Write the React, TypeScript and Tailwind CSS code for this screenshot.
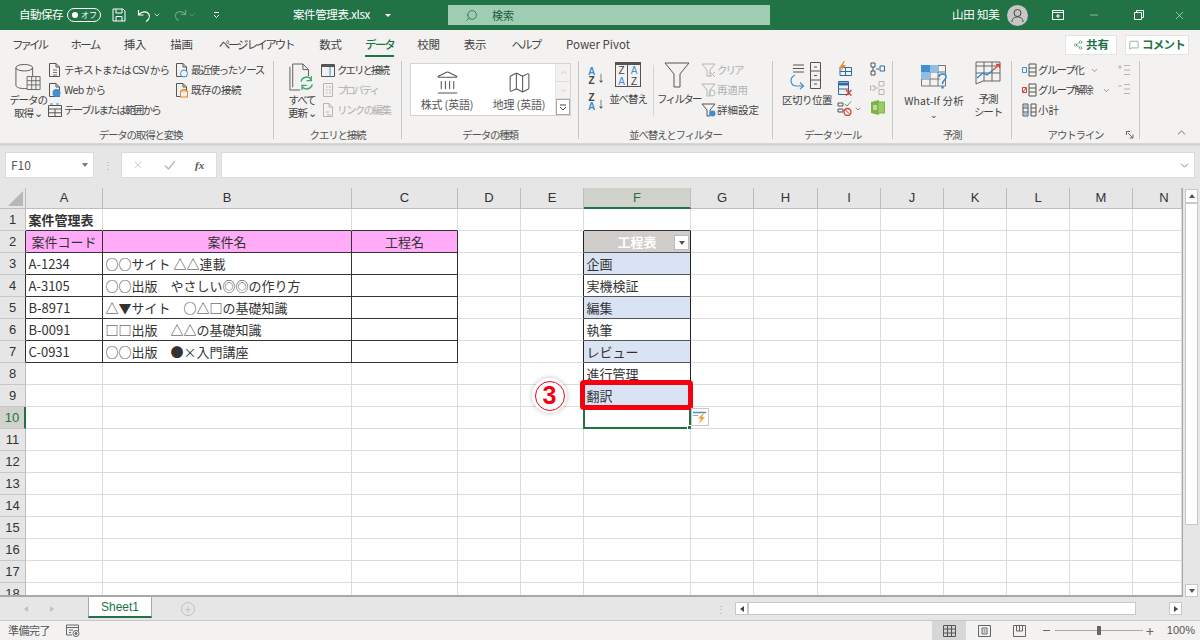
import type { ReactNode } from 'react';
import { ChevronDown, ChevronUp, Landmark, Map as MapIcon, Search, X, Minus, Share2, MessageSquare } from 'lucide-react';

const columns = ['A', 'B', 'C', 'D', 'E', 'F', 'G', 'H', 'I', 'J', 'K', 'L', 'M', 'N'];
const rows = Array.from({ length: 18 }, (_, i) => i + 1);

const tabs: { label: string; width: string; track: string; active?: boolean }[] = [
  { label: 'ファイル', width: 'w-[58px]', track: 'tracking-[-3px]' },
  { label: 'ホーム', width: 'w-[54px]', track: 'tracking-[-1.8px]' },
  { label: '挿入', width: 'w-[46px]', track: 'tracking-[-0.3px]' },
  { label: '描画', width: 'w-[47px]', track: 'tracking-[-0.3px]' },
  { label: 'ページ レイアウト', width: 'w-[102px]', track: 'tracking-[-2.2px]' },
  { label: '数式', width: 'w-[47px]', track: 'tracking-[-0.3px]' },
  { label: 'データ', width: 'w-[51px]', track: 'tracking-[-1.8px]', active: true },
  { label: '校閲', width: 'w-[47px]', track: 'tracking-[-0.3px]' },
  { label: '表示', width: 'w-[46px]', track: 'tracking-[-0.3px]' },
  { label: 'ヘルプ', width: 'w-[56px]', track: 'tracking-[-1.8px]' },
  { label: 'Power Pivot', width: 'w-[88px]', track: 'tracking-[0px]' },
];

const cellText: Record<string, string> = {
  A1: '案件管理表',
  A2: '案件コード',
  B2: '案件名',
  C2: '工程名',
  A3: 'A-1234',
  B3: '○○サイト △△連載',
  A4: 'A-3105',
  B4: '○○出版　やさしい◎◎の作り方',
  A5: 'B-8971',
  B5: '△▼サイト　○△□の基礎知識',
  A6: 'B-0091',
  B6: '□□出版　△△の基礎知識',
  A7: 'C-0931',
  B7: '○○出版　●×入門講座',
  F2: '工程表',
  F3: '企画',
  F4: '実機検証',
  F5: '編集',
  F6: '執筆',
  F7: 'レビュー',
  F8: '進行管理',
  F9: '翻訳',
};

const Stroke = ({ w, h, children }: { w: number; h: number; children: ReactNode }) => (
  <svg width={w} height={h} viewBox={`0 0 ${w} ${h}`} fill="none" stroke="#555" strokeWidth="1" className="shrink-0">
    {children}
  </svg>
);

const Page = ({ c = '#555' }: { c?: string }) => <path d="M1.5 14.5V1.5H8L11.5 5V14.5Z M8 1.5V5H11.5" stroke={c} />;

const RibbonRow = ({ icon, label, muted, chevron, track = 'tracking-[-1.3px]' }: { icon: ReactNode; label: string; muted?: boolean; chevron?: string; track?: string }) => (
  <div className={`flex items-center h-[20px] whitespace-nowrap text-[10.5px] ${track} ${muted ? 'text-[#b0b0b0]' : 'text-[#444]'}`}>
    <span className="w-[16px] flex justify-start shrink-0">{icon}</span>
    <span>{label}</span>
    {chevron && <ChevronDown className={`${chevron} text-[#555]`} size={9} strokeWidth={1.5} />}
  </div>
);

const BigLabel = ({ children, width, track = 'tracking-[-1.1px]' }: { children: ReactNode; width: string; track?: string }) => (
  <div className={`${width} text-center text-[10.5px] leading-[13px] ${track} text-[#444] whitespace-nowrap`}>{children}</div>
);

const Group = ({ label, width, children, launcher }: { label: string; width: string; children: ReactNode; launcher?: boolean }) => (
  <div className={`${width} h-[78px] shrink-0 flex flex-col border-r border-[#c8c6c4]`}>
    <div className="-mt-[2px] h-[68px] shrink-0 flex">{children}</div>
    <div className="relative h-[16px] shrink-0 flex items-center justify-center text-[10.5px] tracking-[-1.2px] text-[#555]">
      {label}
      {launcher && (
        <svg width="8" height="8" viewBox="0 0 8 8" fill="none" stroke="#666" className="absolute right-[5px] top-[4px]">
          <path d="M.5 4V.5H4 M2 2L7 7 M7 3.5V7H3.5" />
        </svg>
      )}
    </div>
  </div>
);

const cellClass = (col: string, row: number) => {
  const inLeft = ['A', 'B', 'C'].includes(col) && row >= 2 && row <= 7;
  const inRight = col === 'F' && row >= 2 && row <= 8;
  let cls = 'border-r border-b border-r-[#dcdcdc] border-b-[#dcdcdc]';
  if (inLeft) cls = 'border-r border-b border-r-[#333] border-b-[#333]';
  if (['A', 'B', 'C'].includes(col) && row === 1) cls = 'border-r border-b border-r-[#dcdcdc] border-b-[#333]';
  if (inRight) cls = 'border-r border-b border-r-[#222] border-b-[#555]';
  if (col === 'F' && row === 1) cls = 'border-r border-b border-r-[#dcdcdc] border-b-[#333]';
  if (col === 'E' && row >= 2 && row <= 8) cls = 'border-r border-b border-r-[#222] border-b-[#dcdcdc]';
  if (col === 'E' && row === 10) cls = 'border-r border-b border-r-[#217346] border-b-[#dcdcdc]';
  if (col === 'F' && row === 10) cls = 'border-2 border-[#217346] -ml-px';
  if (row === 2 && ['A', 'B', 'C'].includes(col)) cls += ' bg-[#ffabf7] text-center';
  if (col === 'F' && row === 2) cls += ' bg-[#d0cdca] text-center text-white font-bold';
  if (col === 'F' && [3, 5, 7, 9].includes(row)) cls += ' bg-[#dae3f3]';
  if (col === 'A' && row === 1) cls += ' font-bold';
  return cls;
};

const Cell = ({ col, row }: { col: string; row: number }) => {
  const text = cellText[`${col}${row}`];
  return (
    <div className={`relative min-w-0 flex items-center justify-center px-[2.5px] text-[13px] text-[#333] whitespace-nowrap ${cellClass(col, row)}`}>
      <span className={row === 2 ? 'w-full' : 'w-full text-left'}>{text}</span>
      {col === 'F' && row === 2 && (
        <span className="absolute right-[1px] top-[4px] w-[15px] h-[15px] bg-white border border-[#bbb] flex items-center justify-center">
          <span className="w-0 h-0 border-x-[3.5px] border-x-transparent border-t-[4px] border-t-[#555]" />
        </span>
      )}
      {col === 'F' && row === 10 && (
        <>
          <span className="absolute -right-[3px] -bottom-[3px] w-[5px] h-[5px] bg-[#217346] border border-white" />
          <span className="absolute -right-[20px] -top-[1px] w-[18px] h-[18px] bg-white border border-[#c8c8c8] flex items-center justify-center z-10">
            <svg width="16" height="16" viewBox="0 0 16 16" fill="none">
              <path d="M1 3.5H14" stroke="#4a8fd0" strokeWidth="1.5" />
              <path d="M1 6.5H6" stroke="#9ab" />
              <path d="M11 4.5L6 9.5H9L6.5 15L13 8H10L12 4.5Z" fill="#f0a030" />
            </svg>
          </span>
        </>
      )}
    </div>
  );
};

export default function App() {
  return (
    <div className="relative w-[1200px] h-[640px] overflow-hidden flex flex-col bg-[#e6e6e6] text-[11px] font-['Noto_Sans_CJK_JP','Liberation_Sans',sans-serif]">
      {/* title bar */}
      <div className="h-[30px] shrink-0 bg-[#217346] flex items-center text-white text-[11.5px]">
        <span className="ml-[19px] w-[48px] tracking-[-0.5px] whitespace-nowrap">自動保存</span>
        <span className="w-[34px] h-[14px] rounded-full border border-white flex items-center justify-between pl-[4px] pr-[3px]">
          <span className="w-[6px] h-[6px] rounded-full bg-white" />
          <span className="text-[8px] leading-none">オフ</span>
        </span>
        <svg className="ml-[11px]" width="14" height="14" viewBox="0 0 14 14" fill="none" stroke="white">
          <path d="M1 1H11L13 3V13H1Z M4 1V5H10V1 M4 13V8.5H10V13" />
        </svg>
        <svg className="ml-[11px]" width="15" height="15" viewBox="0 0 15 15" fill="none" stroke="white" strokeWidth="1.2">
          <path d="M1.5 2V7H6.5 M1.8 6.8C4 3.5 10 2.5 12 6.5C13.2 9 11.5 12 9 13.5" />
        </svg>
        <ChevronDown className="ml-[1px]" size={8} strokeWidth={2} />
        <svg className="ml-[12px]" width="14" height="14" viewBox="0 0 15 15" fill="none" stroke="#6fa98a" strokeWidth="1.2">
          <path d="M13.5 2V7H8.5 M13.2 6.8C11 3.5 5 2.5 3 6.5C1.8 9 3.5 12 6 13.5" />
        </svg>
        <ChevronDown className="ml-[1px] text-[#6fa98a]" size={8} strokeWidth={2} />
        <svg className="ml-[17px]" width="7" height="8" viewBox="0 0 7 8" fill="none" stroke="white">
          <path d="M1 1.5H6 M1 4L3.5 6.5L6 4" />
        </svg>
        <span className="ml-[73px] w-[90px] tracking-[-0.4px] whitespace-nowrap">案件管理表.xlsx</span>
        <span className="ml-[2px] w-0 h-0 border-x-[3px] border-x-transparent border-t-[3px] border-t-white" />
        <div className="ml-[57px] w-[322px] h-[20px] bg-[#9fcdb3] flex items-center text-[#1d5c3a] text-[11px]">
          <Search className="ml-[17px] -scale-x-100" size={13} strokeWidth={1.3} />
          <span className="ml-[14px]">検索</span>
        </div>
        <span className="ml-[182px] w-[46px] whitespace-nowrap tracking-[-0.2px]">山田 知美</span>
        <span className="ml-[9px] w-[21px] h-[21px] rounded-full bg-[#c8c6c4] flex items-center justify-center">
          <svg width="13" height="15" viewBox="0 0 13 15" fill="none" stroke="#444">
            <circle cx="6.5" cy="5" r="3.5" />
            <path d="M1 14C1 10 4 9 6.5 9S12 10 12 14" />
          </svg>
        </span>
        <svg className="ml-[24px]" width="12" height="10" viewBox="0 0 12 10" fill="none" stroke="white">
          <path d="M.5.5H11.5V9.5H.5Z M.5 2.5H11.5 M6 4V8 M4 6H8" />
        </svg>
        <Minus className="ml-[24px]" size={12} strokeWidth={1} />
        <svg className="ml-[34px]" width="10" height="10" viewBox="0 0 10 10" fill="none" stroke="white">
          <path d="M.5 2.5H7.5V9.5H.5Z M2.5 2.5V.5H9.5V7.5H7.5" />
        </svg>
        <X className="ml-[29px]" size={13} strokeWidth={1} />
      </div>

      {/* ribbon tabs */}
      <div className="h-[29px] shrink-0 bg-[#f3f2f1] flex items-center text-[11.5px] text-[#444]">
        {tabs.map((tab) => (
          <div key={tab.label} className={`${tab.width} h-full flex items-center justify-center whitespace-nowrap ${tab.track}`}>
            <span className={`relative h-[20px] leading-[20px] -mt-[2px] ${tab.active ? 'text-[#217346] font-medium' : ''}`}>
              {tab.label}
              {tab.active && <span className="absolute left-0 right-0 -bottom-[3px] h-[2px] bg-[#217346]" />}
            </span>
          </div>
        ))}
        <div className="ml-auto flex items-center gap-[8px] pr-[11px] text-[#217346] font-bold text-[11.5px]">
          <span className="w-[52px] h-[20px] bg-white border border-[#e6e4e2] flex items-center justify-center gap-[3px]">
            <Share2 size={10} strokeWidth={1.2} />
            共有
          </span>
          <span className="w-[64px] h-[20px] bg-white border border-[#e6e4e2] flex items-center justify-center gap-[3px] tracking-[-0.8px]">
            <MessageSquare size={10} strokeWidth={1.2} />
            コメント
          </span>
        </div>
      </div>

      {/* ribbon */}
      <div className="h-[85px] shrink-0 bg-[#f3f2f1] flex pl-[8px] pt-[2px] border-b border-[#d6d6d6] shadow-[0_1px_2px_rgba(0,0,0,0.15)]">
        <Group label="データの取得と変換" width="w-[266px]">
          <div className="w-[40px] flex flex-col items-center pt-[4px] shrink-0">
            <svg width="26" height="28" viewBox="0 0 28 30" fill="none" stroke="#555">
              <ellipse cx="10" cy="5" rx="9" ry="3.5" />
              <path d="M1 5V24C1 26 5 27.5 10 27.5H13 M19 5V14" />
              <path d="M13 14.5H27V28.5H13Z M13 19H27 M13 23.5H27 M18 14.5V28.5 M22.5 14.5V28.5" stroke="#666" fill="#f3f2f1" />
            </svg>
            <div className="mt-[2px]"><BigLabel width="w-[40px]">データの<br />取得 ⌄</BigLabel></div>
          </div>
          <div className="w-[127px] shrink-0 pt-[1px]">
            <RibbonRow track="tracking-[-0.9px]" label="テキストまたは CSV から" icon={<Stroke w={14} h={16}><Page /><path d="M5 8H9 M5 10.5H9 M5 13H9" stroke="#777" /></Stroke>} />
            <RibbonRow track="tracking-[-0.6px]" label="Web から" icon={<Stroke w={14} h={16}><Page /><circle cx="8.5" cy="11" r="4" fill="#3f8fd2" stroke="none" /></Stroke>} />
            <RibbonRow track="tracking-[-1.7px]" label="テーブルまたは範囲から" icon={<Stroke w={14} h={14}><path d="M.5 2.5H13.5V13.5H.5Z M.5 6H13.5 M.5 9.8H13.5 M7 6V13.5" /><path d="M2 1H5 M8 1H11" stroke="#3f8fd2" /></Stroke>} />
          </div>
          <div className="flex-1 pt-[1px]">
            <RibbonRow label="最近使ったソース" icon={<Stroke w={14} h={16}><Page /><circle cx="9" cy="11.5" r="3.5" fill="#f3f2f1" stroke="#3f8fd2" /></Stroke>} />
            <RibbonRow track="tracking-[-0.5px]" label="既存の接続" icon={<Stroke w={14} h={16}><Page /><rect x="5.5" y="9" width="7" height="6" fill="#f3f2f1" stroke="#e08a2c" /><path d="M7 9V7.5H11V9" stroke="#e08a2c" /></Stroke>} />
          </div>
        </Group>

        <Group label="クエリと接続" width="w-[128px]">
          <div className="w-[44px] ml-[6px] flex flex-col items-center pt-[4px] shrink-0">
            <svg width="26" height="28" viewBox="0 0 28 30" fill="none" stroke="#555">
              <path d="M4 26V1H15L21 7V14 M15 1V7H21 M1 4V29H12" />
              <path d="M13 20A6 6 0 0 1 24 18 M25 23A6 6 0 0 1 14 25" stroke="#3fa66b" strokeWidth="1.6" />
              <path d="M24 14V19H19 M14 29V24H19" stroke="#3fa66b" strokeWidth="1.4" />
            </svg>
            <div className="mt-[2px]"><BigLabel width="w-[40px]">すべて<br />更新 ⌄</BigLabel></div>
          </div>
          <div className="flex-1 pt-[1px] -ml-[3px]">
            <RibbonRow track="tracking-[-2px]" label="クエリと接続" icon={<Stroke w={14} h={13}><path d="M.5.5H13.5V12.5H.5Z" /><path d="M.5 2H13.5" strokeWidth="2" /><path d="M9 3V12.5" stroke="#3f8fd2" /></Stroke>} />
            <RibbonRow track="tracking-[-2.2px]" muted label="プロパティ" icon={<Stroke w={14} h={14}><path d="M2.5.5H11.5V13.5H2.5Z M5 4H6.5 M8 4H10 M5 7H6.5 M8 7H10 M5 10H6.5 M8 10H10" stroke="#b5b5b5" /></Stroke>} />
            <RibbonRow track="tracking-[-1.6px]" muted label="リンクの編集" icon={<Stroke w={14} h={16}><path d="M2.5 14.5V1.5H8L11.5 5V14.5Z M8 1.5V5H11.5 M5 10H8 M6 13H10" stroke="#b5b5b5" /></Stroke>} />
          </div>
        </Group>

        <Group label="データの種類" width="w-[177px]">
          <div className="ml-[8px] mt-[4px] w-[161px] h-[53px] bg-white border border-[#d4d4d4] flex">
            <div className="w-[72px] flex flex-col items-center pt-[6px] text-[#555]">
              <Landmark size={25} strokeWidth={1} />
              <span className="mt-[1px] text-[11px] tracking-[-0.2px] whitespace-nowrap">株式 (英語)</span>
            </div>
            <div className="w-[72px] flex flex-col items-center pt-[6px] text-[#555]">
              <MapIcon size={25} strokeWidth={1} />
              <span className="mt-[1px] text-[11px] tracking-[-0.2px] whitespace-nowrap">地理 (英語)</span>
            </div>
            <div className="flex-1 flex flex-col border-l border-[#e4e4e4] bg-[#f3f2f1]">
              <span className="h-[18px] flex items-center justify-center border-b border-[#ddd] text-[#c4c4c4]"><ChevronUp size={9} /></span>
              <span className="h-[17px] flex items-center justify-center border-b border-[#ddd] text-[#c4c4c4]"><ChevronDown size={9} /></span>
              <span className="flex-1 flex items-center justify-center border border-[#aaa] bg-white">
                <svg width="8" height="7" viewBox="0 0 8 7" fill="none" stroke="#444"><path d="M1 1H7 M1 3L4 6L7 3" /></svg>
              </span>
            </div>
          </div>
        </Group>

        <Group label="並べ替えとフィルター" width="w-[194px]">
          <div className="w-[20px] ml-[9px] pt-[8px] flex flex-col gap-[8px] shrink-0 leading-[9px] font-['Liberation_Sans',sans-serif] text-[10px] font-bold">
            <div className="flex items-center"><span className="text-center"><span className="text-[#3f8fd2]">A</span><br /><span className="text-[#444]">Z</span></span><span className="ml-[2px] text-[15px] font-normal text-[#444]">↓</span></div>
            <div className="flex items-center"><span className="text-center"><span className="text-[#444]">Z</span><br /><span className="text-[#3f8fd2]">A</span></span><span className="ml-[2px] text-[15px] font-normal text-[#444]">↓</span></div>
          </div>
          <div className="w-[40px] flex flex-col items-center pt-[3px] shrink-0">
            <div className="w-[26px] h-[25px] border border-[#555] border-t-[3px] grid grid-cols-2 text-center leading-[11px] text-[10px] font-['Liberation_Sans',sans-serif] divide-x divide-[#555]">
              <span className="text-[#444]">Z<br /><span className="text-[#3f8fd2]">A</span></span>
              <span className="text-[#3f8fd2]">A<br /><span className="text-[#444]">Z</span></span>
            </div>
            <div className="mt-[5px]"><BigLabel width="w-[40px]">並べ替え</BigLabel></div>
          </div>
          <div className="mt-[6px] ml-[5px] h-[51px] border-l border-[#d4d4d4]" />
          <div className="w-[40px] flex flex-col items-center pt-[3px] shrink-0 ml-[3px]">
            <svg width="26" height="26" viewBox="0 0 26 26" fill="none" stroke="#555">
              <path d="M1 1H25L16 12V25H10V12Z" />
            </svg>
            <div className="mt-[4px]"><BigLabel width="w-[40px]" track="tracking-[-1.7px]">フィルター</BigLabel></div>
          </div>
          <div className="flex-1 pl-[4px] pt-[1px]">
            <RibbonRow muted track="tracking-[-2px]" label="クリア" icon={<Stroke w={16} h={14}><path d="M1 1H14L9 7V13H6V7Z" stroke="#b5b5b5" /><path d="M9 9L14 14 M14 9L9 14" stroke="#b5b5b5" /></Stroke>} />
            <RibbonRow muted track="tracking-[-0.2px]" label="再適用" icon={<Stroke w={16} h={14}><path d="M1 1H14L9 7V13H6V7Z" stroke="#b5b5b5" /><circle cx="11" cy="10" r="3" stroke="#a8c8a8" /></Stroke>} />
            <RibbonRow track="tracking-[0px]" label="詳細設定" icon={<Stroke w={16} h={14}><path d="M1 1H14L9 7V13H6V7Z" /><circle cx="11.5" cy="10.5" r="3" fill="#3f8fd2" stroke="none" /></Stroke>} />
          </div>
        </Group>

        <Group label="データ ツール" width="w-[120px]">
          <div className="w-[52px] ml-[8px] flex flex-col items-center pt-[3px] shrink-0">
            <svg width="38" height="28" viewBox="0 0 38 28" fill="none" stroke="#555">
              <path d="M5 3H16 M5 6.5H16 M5 10H16" />
              <path d="M22.5.5H32.5V26.5H22.5Z M22.5 9H32.5 M22.5 18H32.5 M26 5H29 M26 13.5H29 M26 22H29" />
              <path d="M7 13C1 16 2 24 9 24H15 M12 20.5L15.5 24L12 27" stroke="#3f8fd2" strokeWidth="1.2" />
            </svg>
            <div className="mt-[3px]"><BigLabel width="w-[52px]" track="tracking-[-0.5px]">区切り位置</BigLabel></div>
          </div>
          <div className="w-[32px] shrink-0 flex flex-col items-start gap-[5px] pt-[2px] pl-[4px]">
            <svg width="15" height="15" viewBox="0 0 15 15" fill="none" stroke="#2b6ca8">
              <path d="M3 6.5H14.5V14.5H3Z M3 10.5H14.5 M8.5 6.5V14.5" />
              <path d="M7 0L2 7H5L3 11L9 4H6L8 0Z" fill="#e08a2c" stroke="none" />
            </svg>
            <svg width="15" height="15" viewBox="0 0 15 15" fill="none" stroke="#2b6ca8">
              <path d="M1.5.5H11.5V13.5H1.5Z" />
              <path d="M1.5 3H11.5" strokeWidth="3" />
              <path d="M1.5 8H11.5" />
              <path d="M9 9L14.5 14.5 M14.5 9L9 14.5" stroke="#d83b2f" strokeWidth="1.4" />
            </svg>
            <div className="flex items-center">
              <svg width="15" height="15" viewBox="0 0 15 15" fill="none" stroke="#555">
                <path d="M1 2H6V5H1Z M1 8H6V11H1Z" />
                <path d="M8 3L10 5L14 0.5" stroke="#3fa66b" />
                <circle cx="10.5" cy="11" r="3.5" stroke="#d83b2f" strokeWidth="1.3" />
                <path d="M8 8.5L13 13.5" stroke="#d83b2f" />
              </svg>
              <ChevronDown className="ml-[2px] text-[#555]" size={8} strokeWidth={2} />
            </div>
          </div>
          <div className="flex-1 flex flex-col gap-[5px] pt-[3px] pl-[5px]">
            <svg width="15" height="14" viewBox="0 0 15 14" fill="none" stroke="#555">
              <path d="M1 1H5V5H1Z M1 9H5V13H1Z M3 5V9" />
              <path d="M10 4H14.5V9H10Z" stroke="#2b6ca8" />
              <path d="M6 7H9" stroke="#2b6ca8" />
            </svg>
            <svg width="15" height="14" viewBox="0 0 15 14" fill="none" stroke="#b5b5b5">
              <path d="M.5 5H5V9H.5Z M9 .5H14V5H9Z M9 8.5H14V13.5H9Z M5 7H9" />
            </svg>
            <svg width="15" height="15" viewBox="0 0 15 15" fill="none">
              <path d="M1 2L9 0V15L1 13Z" fill="#7cb342" />
              <rect x="8" y="2" width="6.5" height="11" fill="#9ccc65" stroke="#7cb342" />
              <path d="M4 5V10 M6 5V10" stroke="white" />
            </svg>
          </div>
        </Group>

        <Group label="予測" width="w-[119px]">
          <div className="w-[70px] ml-[6px] flex flex-col items-center pt-[5px] shrink-0">
            <svg width="28" height="26" viewBox="0 0 28 26" fill="none" stroke="#777">
              <path d="M1.5 1.5H25.5V22H1.5Z M1.5 8H25.5 M1.5 15H25.5 M10 1.5V22 M18 1.5V22" />
              <rect x="1" y="1" width="9" height="7" fill="#3f8fd2" stroke="none" />
              <rect x="1" y="8" width="9" height="7" fill="#8fbfe6" stroke="none" />
              <rect x="10" y="1" width="8" height="7" fill="#8fbfe6" stroke="none" />
              <path d="M19 13C19 9 26 9 26 13C26 16 22.5 16 22.5 20" stroke="#2b86cf" strokeWidth="1.5" fill="#f3f2f1" />
              <circle cx="22.5" cy="23.5" r="1.2" fill="#2b86cf" stroke="none" />
            </svg>
            <div className="mt-[4px]"><BigLabel width="w-[70px]" track="tracking-[0.1px]">What-If 分析<br /><span className="text-[9px]">⌄</span></BigLabel></div>
          </div>
          <div className="w-[36px] ml-[1px] flex flex-col items-center pt-[2px] shrink-0">
            <svg width="26" height="24" viewBox="0 0 26 24" fill="none" stroke="#666">
              <path d="M1 1H25V20H8L1 23Z M1 5H25 M9 1V20 M17 1V20 M1 12H25" />
              <path d="M2 17L8 12L12 14L18 9" stroke="#2b86cf" strokeWidth="1.3" />
              <path d="M18 9L24 4 M21 3.5H24.5V7" stroke="#e0403a" strokeWidth="1.3" />
            </svg>
            <div className="mt-[7px]"><BigLabel width="w-[36px]">予測<br />シート</BigLabel></div>
          </div>
        </Group>

        <Group label="アウトライン" width="w-[128px]" launcher>
          <div className="w-[105px] shrink-0 pl-[10px] pt-[1px]">
            <RibbonRow chevron="ml-[7px]" label="グループ化" icon={<Stroke w={15} h={14}><path d="M.5 4.5H4.5V9.5H.5Z" stroke="#3f8fd2" /><path d="M7 1H14V13H7Z M7 5H14 M7 9H14" /></Stroke>} />
            <RibbonRow chevron="ml-[9px]" label="グループ解除" icon={<Stroke w={15} h={14}><path d="M.5 4.5H4.5V9.5H.5Z M1 9L4 5" stroke="#d83b2f" /><path d="M7 1H14V13H7Z M7 5H14 M7 9H14" /></Stroke>} />
            <RibbonRow track="tracking-[0px]" label="小計" icon={<Stroke w={15} h={14}><path d="M1 1H6V13H1Z M9 1H14V13H9Z M9 5H14 M9 9H14 M1 5H6 M1 9H6" /><path d="M2 3H5 M2 11H5" stroke="#3f8fd2" /></Stroke>} />
          </div>
          <div className="flex-1 pt-[5px] flex flex-col gap-[7px]">
            <svg width="14" height="12" viewBox="0 0 14 12" fill="none" stroke="#b5b5b5"><path d="M1 3H5 M3 1V5 M7 1.5H13 M7 6H13 M7 10.5H13" /></svg>
            <svg width="14" height="12" viewBox="0 0 14 12" fill="none" stroke="#b5b5b5"><path d="M1 3H5 M7 1.5H13 M7 6H13 M7 10.5H13" /></svg>
          </div>
        </Group>
        <div className="flex-1 flex items-end justify-end pr-[12px] pb-[4px] text-[#555]">
          <ChevronUp size={13} strokeWidth={1.5} />
        </div>
      </div>

      {/* formula bar */}
      <div className="h-[30px] shrink-0 mt-[6px] flex items-center pl-[5px] pr-[5px]">
        <div className="w-[89px] h-[26px] bg-white border border-[#dcdcdc] flex items-center justify-between pl-[5px] pr-[5px] text-[12px] text-[#555]">
          F10
          <span className="w-0 h-0 border-x-[3.5px] border-x-transparent border-t-[4px] border-t-[#777]" />
        </div>
        <div className="w-[27px] flex justify-center text-[#aaa] text-[10px] leading-[4px]">⋮</div>
        <div className="w-[96px] h-[26px] bg-white border border-[#dcdcdc] flex items-center text-[#b8b8b8]">
          <X className="ml-[10px]" size={12} strokeWidth={1.4} />
          <svg className="ml-[20px]" width="12" height="12" viewBox="0 0 12 12" fill="none" stroke="#b8b8b8" strokeWidth="1.4"><path d="M1 6.5L4.5 10L11 2" /></svg>
          <span className="ml-[19px] text-[11px] italic font-bold text-[#555] font-['Liberation_Serif',serif]">fx</span>
        </div>
        <div className="ml-[4px] flex-1 h-[26px] bg-white border border-[#dcdcdc] flex items-center justify-end pr-[3px] text-[#666]">
          <ChevronDown size={13} strokeWidth={1.5} />
        </div>
      </div>

      {/* sheet */}
      <div className="mt-[8px] h-[409px] shrink-0 flex overflow-hidden">
        <div className="w-[1182px] shrink-0 overflow-hidden border-b-2 border-[#a8a8a8] bg-white">
          <div className="grid grid-cols-[26px_77px_249px_106px_63px_63px_107px_63px_64px_63px_63px_63px_63px_63px_49px] grid-rows-[21px_repeat(18,22px)]">
            <div className="bg-[#e6e6e6] border-r border-b border-[#bdbdbd] flex items-end justify-end pr-[2px] pb-[2px]">
              <span className="w-0 h-0 border-l-[15px] border-l-transparent border-b-[15px] border-b-[#b8b8b8]" />
            </div>
            {columns.map((col) => (
              <div
                key={col}
                className={`flex items-center justify-center text-[13px] font-['Liberation_Sans',sans-serif] border-r ${col === 'N' ? 'pl-[14px]' : ''} ${
                  col === 'F'
                    ? 'bg-[#d2d2cc] text-[#217346] border-r-[#bdbdbd] border-b-2 border-b-[#217346]'
                    : 'bg-[#e6e6e6] text-[#333] border-r-[#bdbdbd] border-b border-b-[#bdbdbd]'
                }`}
              >
                {col}
              </div>
            ))}
            {rows.map((row) => (
              <div key={row} className="contents">
                <div
                  className={`flex items-center justify-center text-[13px] font-['Liberation_Sans',sans-serif] border-b border-b-[#c8c8c8] ${
                    row === 10
                      ? 'bg-[#d2d2cc] text-[#217346] border-r-2 border-r-[#217346]'
                      : row >= 2 && row <= 7
                        ? 'bg-[#e6e6e6] text-[#333] border-r border-r-[#333]'
                        : 'bg-[#e6e6e6] text-[#333] border-r border-r-[#bdbdbd]'
                  }`}
                >
                  {row}
                </div>
                {columns.map((col) => (
                  <Cell key={col} col={col} row={row} />
                ))}
              </div>
            ))}
          </div>
        </div>
        {/* vertical scrollbar */}
        <div className="flex-1 flex flex-col items-center pt-[1px] border-l border-[#a8a8a8]">
          <span className="w-[13px] h-[14px] bg-white border border-[#c8c8c8] flex items-center justify-center">
            <span className="w-0 h-0 border-x-[3.5px] border-x-transparent border-b-[4px] border-b-[#555]" />
          </span>
          <span className="w-[13px] h-[322px] bg-white border border-[#c8c8c8]" />
          <span className="flex-1" />
          <span className="w-[13px] h-[13px] bg-white border border-[#c8c8c8] flex items-center justify-center">
            <span className="w-0 h-0 border-x-[3.5px] border-x-transparent border-t-[4px] border-t-[#555]" />
          </span>
        </div>
      </div>

      {/* sheet tabs */}
      <div className="h-[24px] shrink-0 flex items-center border-b border-[#c8c8c8]">
        <span className="ml-[24px] w-0 h-0 border-y-[3px] border-y-transparent border-r-[4px] border-r-[#c0c0c0]" />
        <span className="ml-[22px] w-0 h-0 border-y-[3px] border-y-transparent border-l-[4px] border-l-[#c0c0c0]" />
        <div className="ml-[34px] w-[64px] h-[21px] self-start bg-white border-x border-[#a8a8a8] border-b-2 border-b-[#217346] flex items-center justify-center text-[#217346] text-[12px] font-['Liberation_Sans',sans-serif]">
          Sheet1
        </div>
        <span className="ml-[29px] w-[14px] h-[14px] rounded-full border border-[#c0c0c0] flex items-center justify-center text-[#c0c0c0] text-[12px] leading-none">+</span>
        <span className="ml-[521px] text-[#aaa] text-[10px] leading-none">⋮</span>
        <span className="ml-[9px] w-[13px] h-[13px] bg-white border border-[#c8c8c8] flex items-center justify-center">
          <span className="w-0 h-0 border-y-[3px] border-y-transparent border-r-[4px] border-r-[#444]" />
        </span>
        <span className="w-[388px] h-[13px] bg-white border border-[#c8c8c8]" />
        <span className="ml-[33px] w-[13px] h-[13px] bg-white border border-[#c8c8c8] flex items-center justify-center">
          <span className="w-0 h-0 border-y-[3px] border-y-transparent border-l-[4px] border-l-[#444]" />
        </span>
      </div>

      {/* status bar */}
      <div className="flex-1 bg-[#f3f2f1] flex items-center text-[11px] text-[#555]">
        <span className="ml-[8px] w-[42px] whitespace-nowrap tracking-[-0.5px]">準備完了</span>
        <svg className="ml-[16px]" width="14" height="13" viewBox="0 0 14 13" fill="none" stroke="#666">
          <path d="M.5 1H12.5V7 M.5 1V11H6 M.5 3.5H12.5 M3 6H7 M3 8.5H5" />
          <circle cx="10" cy="9.5" r="3" />
          <circle cx="10" cy="9.5" r="1" fill="#666" />
        </svg>
        <span className="ml-[852px] w-[34px] h-full bg-[#d6d6d6] flex items-center justify-center">
          <svg width="13" height="12" viewBox="0 0 13 12" fill="none" stroke="#555"><path d="M.5.5H12.5V11.5H.5Z M.5 4H12.5 M.5 8H12.5 M4.5.5V11.5 M8.5.5V11.5" /></svg>
        </span>
        <svg className="ml-[12px]" width="13" height="12" viewBox="0 0 13 12" fill="none" stroke="#666"><path d="M.5.5H12.5V11.5H.5Z M4 3H9V9H4Z M5.5 5H7.5 M5.5 7H7.5" /></svg>
        <svg className="ml-[22px]" width="13" height="12" viewBox="0 0 13 12" fill="none" stroke="#666"><path d="M.5.5H12.5V11.5H.5Z M3.5.5V6H9.5V.5 M6.5.5V6" /></svg>
        <span className="ml-[17px] w-[7px] h-[1.5px] bg-[#666]" />
        <span className="relative ml-[5px] w-[88px] h-[1px] bg-[#aaa]">
          <span className="absolute left-[42px] -top-[4px] w-[4px] h-[9px] bg-[#666]" />
        </span>
        <span className="ml-[3px] text-[14px] leading-none text-[#666]">+</span>
        <span className="ml-[13px] text-[11px] font-['Liberation_Sans',sans-serif] text-[#555]">100%</span>
      </div>

      {/* callouts */}
      <div className="absolute left-[580px] top-[380px] w-[113px] h-[30px] rounded-[4px] border-[5px] border-[#f4000f]" />
      <div className="absolute left-[532px] top-[378px] w-[35px] h-[35px] rounded-full bg-white shadow-[0_0_5px_rgba(0,0,0,0.25)] flex items-center justify-center">
        <span className="w-[30px] h-[30px] rounded-full border border-[#f4000f] flex items-center justify-center text-[#f4000f] text-[25px] font-bold leading-none font-['Liberation_Sans',sans-serif]">3</span>
      </div>
    </div>
  );
}
